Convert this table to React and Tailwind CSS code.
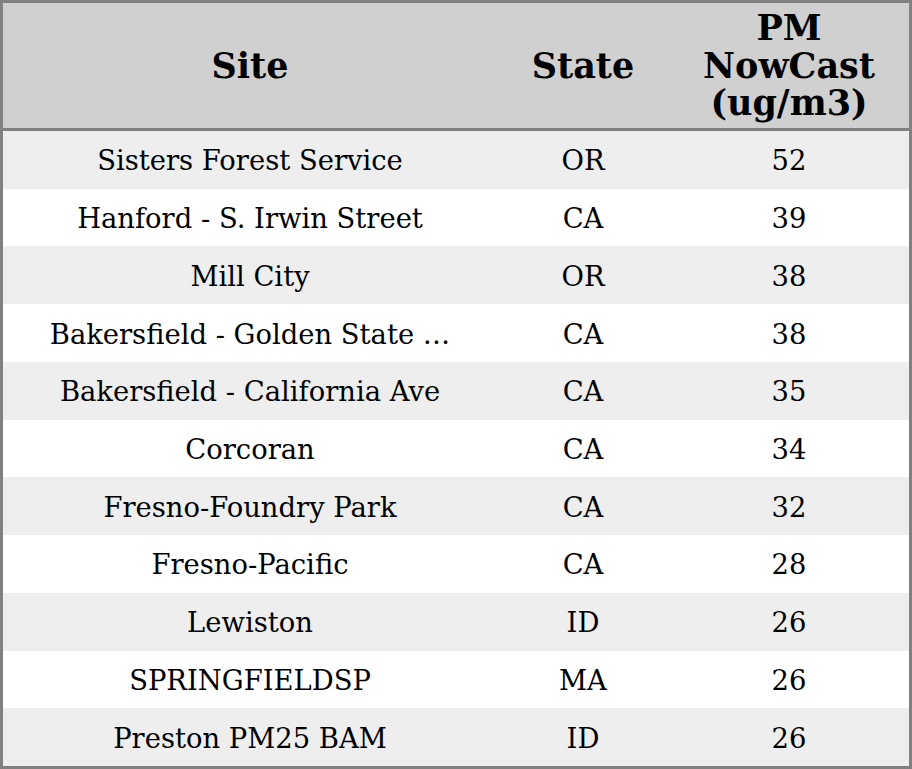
const rows = [
  ["Sisters Forest Service", "OR", "52"],
  ["Hanford - S. Irwin Street", "CA", "39"],
  ["Mill City", "OR", "38"],
  ["Bakersfield - Golden State …", "CA", "38"],
  ["Bakersfield - California Ave", "CA", "35"],
  ["Corcoran", "CA", "34"],
  ["Fresno-Foundry Park", "CA", "32"],
  ["Fresno-Pacific", "CA", "28"],
  ["Lewiston", "ID", "26"],
  ["SPRINGFIELDSP", "MA", "26"],
  ["Preston PM25 BAM", "ID", "26"],
];

export default function App() {
  return (
    <div className="flex h-[769px] w-[912px] flex-col border-[3px] border-[#808080] bg-white font-['DejaVu_Serif',serif] text-black">
      <div className="grid h-[128px] shrink-0 grid-cols-[494px_172px_1fr] items-center border-b-[3px] border-[#808080] bg-[#d0d0d0] text-center text-[35px] font-bold leading-[37.5px]">
        <div>Site</div>
        <div>State</div>
        <div>
          PM
          <br />
          NowCast
          <br />
          (ug/m3)
        </div>
      </div>
      <div className="flex flex-1 flex-col">
        {rows.map((r, i) => (
          <div
            key={i}
            className={`grid flex-1 grid-cols-[494px_172px_1fr] items-center pt-[2px] text-center text-[27.4px] ${i % 2 === 0 ? "bg-[#eeeeee]" : "bg-white"}`}
          >
            <div className="whitespace-nowrap">{r[0]}</div>
            <div>{r[1]}</div>
            <div>{r[2]}</div>
          </div>
        ))}
      </div>
    </div>
  );
}
